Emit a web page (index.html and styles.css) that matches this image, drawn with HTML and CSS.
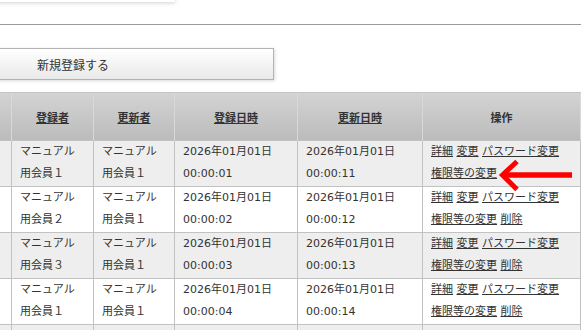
FILE: index.html
```html
<!DOCTYPE html>
<html lang="ja">
<head>
<meta charset="utf-8">
<title>会員一覧</title>
<link rel="stylesheet" href="styles.css">
</head>
<body>
<div class="page">
  <div class="topbox"></div>
  <div class="rule"></div>
  <div class="toolbar">
    <button class="btn-new" type="button">新規登録する</button>
  </div>
  <div class="table-wrap">
    <table class="list">
      <colgroup>
        <col class="c1"><col class="c2"><col class="c3"><col class="c4"><col class="c5"><col class="c6">
      </colgroup>
      <thead>
        <tr>
          <th></th>
          <th><a href="#">登録者</a></th>
          <th><a href="#">更新者</a></th>
          <th><a href="#">登録日時</a></th>
          <th><a href="#">更新日時</a></th>
          <th>操作</th>
        </tr>
      </thead>
      <tbody>
        <tr class="odd">
          <td></td>
          <td>マニュアル<br>用会員１</td>
          <td>マニュアル<br>用会員１</td>
          <td>2026年01月01日<br>00:00:01</td>
          <td>2026年01月01日<br>00:00:11</td>
          <td class="ops"><a href="#">詳細</a> <a href="#">変更</a> <a href="#">パスワード変更</a><br><a href="#">権限等の変更</a></td>
        </tr>
        <tr>
          <td></td>
          <td>マニュアル<br>用会員２</td>
          <td>マニュアル<br>用会員１</td>
          <td>2026年01月01日<br>00:00:02</td>
          <td>2026年01月01日<br>00:00:12</td>
          <td class="ops"><a href="#">詳細</a> <a href="#">変更</a> <a href="#">パスワード変更</a><br><a href="#">権限等の変更</a> <a href="#">削除</a></td>
        </tr>
        <tr class="odd">
          <td></td>
          <td>マニュアル<br>用会員３</td>
          <td>マニュアル<br>用会員１</td>
          <td>2026年01月01日<br>00:00:03</td>
          <td>2026年01月01日<br>00:00:13</td>
          <td class="ops"><a href="#">詳細</a> <a href="#">変更</a> <a href="#">パスワード変更</a><br><a href="#">権限等の変更</a> <a href="#">削除</a></td>
        </tr>
        <tr>
          <td></td>
          <td>マニュアル<br>用会員１</td>
          <td>マニュアル<br>用会員１</td>
          <td>2026年01月01日<br>00:00:04</td>
          <td>2026年01月01日<br>00:00:14</td>
          <td class="ops"><a href="#">詳細</a> <a href="#">変更</a> <a href="#">パスワード変更</a><br><a href="#">権限等の変更</a> <a href="#">削除</a></td>
        </tr>
        <tr class="odd">
          <td></td>
          <td></td>
          <td></td>
          <td></td>
          <td></td>
          <td></td>
        </tr>
      </tbody>
    </table>
    <svg class="arrow" width="80" height="40" viewBox="495 155 80 40" aria-hidden="true">
      <line x1="505" y1="175" x2="572" y2="175" stroke="#ff0000" stroke-width="5.5"/>
      <polyline points="517,161.5 502.5,175 517,189.5" fill="none" stroke="#ff0000" stroke-width="5" stroke-linejoin="miter" stroke-miterlimit="10"/>
    </svg>
  </div>
</div>
</body>
</html>
```
FILE: styles.css
```css
html, body {
  margin: 0;
  padding: 0;
  background: #ffffff;
  overflow: hidden;
}

body {
  font-family: "DejaVu Sans", "Noto Sans CJK JP", sans-serif;
  font-size: 11px;
  color: #333333;
}

.page {
  width: 581px;
}

.topbox {
  width: 195px;
  height: 40px;
  margin-top: -38px;
  margin-left: -20px;
  background: #ffffff;
  box-shadow: 0 1px 4px rgba(0, 0, 0, 0.18);
}

.rule {
  height: 1px;
  margin-top: 22px;
  background: #9a9a9a;
}

.toolbar {
  margin-top: 23px;
  display: flex;
}

.btn-new {
  margin-left: -128px;
  width: 402px;
  height: 32px;
  padding: 0;
  border: 1px solid #b3b3b3;
  background: linear-gradient(#ffffff, #e9e9e9);
  box-shadow: 1px 1px 3px rgba(0, 0, 0, 0.15);
  font-family: "Noto Sans CJK JP", sans-serif;
  font-size: 12px;
  color: #333333;
  text-align: center;
}

.table-wrap {
  position: relative;
  margin-top: 12px;
}

.list {
  margin-left: -50px;
  width: 631px;
  table-layout: fixed;
  border-collapse: separate;
  border-spacing: 0;
  border-top: 1px solid #c4c4c4;
  border-left: 1px solid #c4c4c4;
}

.list .c1 { width: 61px; }
.list .c2 { width: 82px; }
.list .c3 { width: 81px; }
.list .c4 { width: 123px; }
.list .c5 { width: 125px; }
.list .c6 { width: 158px; }

.list th,
.list td {
  box-sizing: border-box;
  border-right: 1px solid #c2c2c2;
  border-bottom: 1px solid #c2c2c2;
}

.list th {
  height: 48px;
  padding: 0;
  background: linear-gradient(#d3d3d3, #bcbcbc);
  border-right-color: #d9d9d9;
  font-weight: bold;
  text-align: center;
  vertical-align: middle;
  color: #333333;
}

.list td {
  height: 46px;
  padding: 0 0 1px 8px;
  line-height: 22px;
  text-align: left;
  vertical-align: top;
  background: #ffffff;
  white-space: nowrap;
}

.list tr.odd td {
  background: #eeeeee;
}

.list a {
  color: #333333;
  text-decoration: underline;
}

.arrow {
  position: absolute;
  left: 495px;
  top: 63px;
}
```
